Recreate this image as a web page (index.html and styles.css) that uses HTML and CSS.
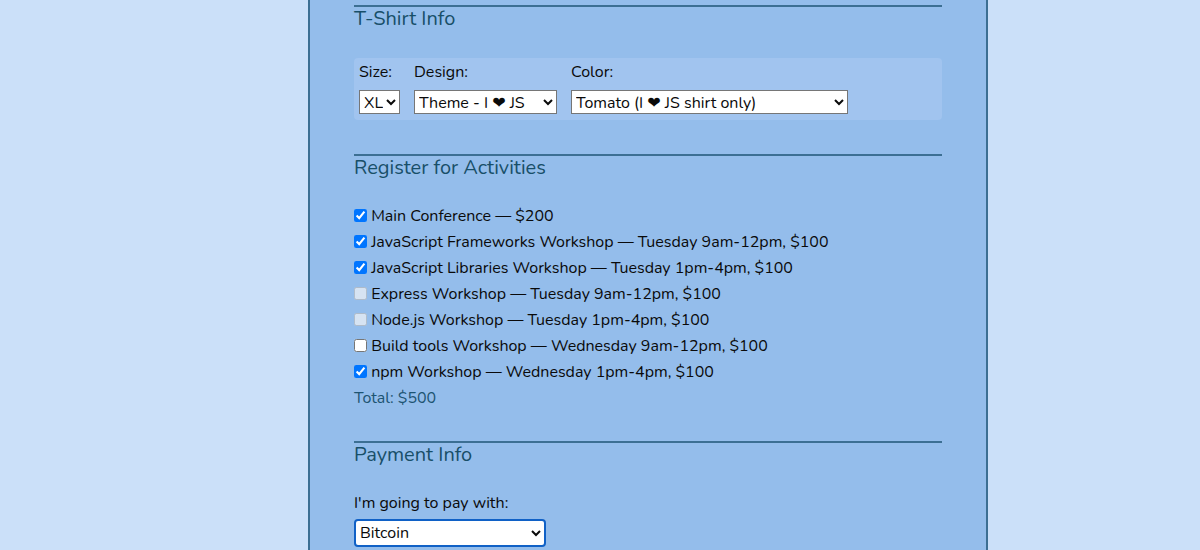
FILE: index.html
```html
<!DOCTYPE html>
<html lang="en">
<head>
<meta charset="utf-8">
<title>Registration</title>
<link rel="stylesheet" href="styles.css">
</head>
<body>
<div class="container">
  <section class="group">
    <h2 class="legend">T-Shirt Info</h2>
    <div class="shirt-box">
      <div class="field">
        <label class="lbl">Size:</label>
        <select class="sel sel-size"><option>XL</option></select>
      </div>
      <div class="field">
        <label class="lbl">Design:</label>
        <select class="sel sel-design"><option>Theme - I &#10084;&#xFE0E; JS</option></select>
      </div>
      <div class="field">
        <label class="lbl">Color:</label>
        <select class="sel sel-color"><option>Tomato (I &#10084;&#xFE0E; JS shirt only)</option></select>
      </div>
    </div>
  </section>

  <section class="group activities">
    <h2 class="legend">Register for Activities</h2>
    <ul class="act-list">
      <li><label><input type="checkbox" checked> Main Conference — $200</label></li>
      <li><label><input type="checkbox" checked> JavaScript Frameworks Workshop — Tuesday 9am-12pm, $100</label></li>
      <li><label><input type="checkbox" checked> JavaScript Libraries Workshop — Tuesday 1pm-4pm, $100</label></li>
      <li><label><input type="checkbox" disabled> Express Workshop — Tuesday 9am-12pm, $100</label></li>
      <li><label><input type="checkbox" disabled> Node.js Workshop — Tuesday 1pm-4pm, $100</label></li>
      <li><label><input type="checkbox"> Build tools Workshop — Wednesday 9am-12pm, $100</label></li>
      <li><label><input type="checkbox" checked> npm Workshop — Wednesday 1pm-4pm, $100</label></li>
    </ul>
    <p class="total">Total: $500</p>
  </section>

  <section class="group payment">
    <h2 class="legend">Payment Info</h2>
    <label class="pay-lbl">I'm going to pay with:</label>
    <select class="sel sel-pay"><option>Bitcoin</option></select>
  </section>
</div>
</body>
</html>
```

FILE: styles.css
```css
html, body {
  margin: 0;
  padding: 0;
}
body {
  background: #cbe0f9;
  font-family: "Nunito", "Noto Sans", "Lato", "DejaVu Sans", sans-serif;
  color: #0a0a0a;
  height: 550px;
  overflow: hidden;
}
.container {
  width: 588px;
  margin-left: 308px;
  padding: 5px 44px 0;
  background: #94bdeb;
  border-left: 2px solid #3c6f93;
  border-right: 2px solid #3c6f93;
  min-height: 545px;
}
.group {
  border-top: 2px solid #3c6f93;
}
.legend {
  margin: 0;
  font-size: 20px;
  font-weight: 400;
  line-height: 24px;
  color: #184f68;
}
.shirt-box {
  margin-top: 27px;
  background: #a1c4ef;
  border-radius: 4px;
  padding: 3px 5px 6px;
  display: flex;
  gap: 14px;
}
.field {
  display: flex;
  flex-direction: column;
}
.lbl {
  font-size: 16px;
  line-height: 22px;
  margin-bottom: 7px;
}
.sel {
  font-family: inherit;
  font-size: 16px;
  height: 24px;
  background: #fff;
  color: #0a0a0a;
  border: 1px solid #767676;
  border-radius: 0;
  padding: 0;
}
.sel-size { width: 41px; }
.sel-design { width: 143px; }
.sel-color { width: 277px; }

.activities {
  margin-top: 34px;
}
.act-list {
  list-style: none;
  margin: 23px 0 0;
  padding: 0;
}
.act-list li {
  font-size: 16px;
  line-height: 26px;
  height: 26px;
}
.act-list input {
  margin: 0;
  width: 13px;
  height: 13px;
  vertical-align: -1px;
}
.total {
  margin: 0;
  font-size: 16px;
  line-height: 26px;
  color: #1d5472;
}
.payment {
  margin-top: 30px;
}
.pay-lbl {
  display: block;
  margin-top: 24px;
  font-size: 16px;
  line-height: 24px;
}
.sel-pay {
  margin-top: 4px;
  width: 192px;
  height: 28px;
  border: 2px solid #1061c6;
  border-radius: 4px;
  padding: 0;
}
```
